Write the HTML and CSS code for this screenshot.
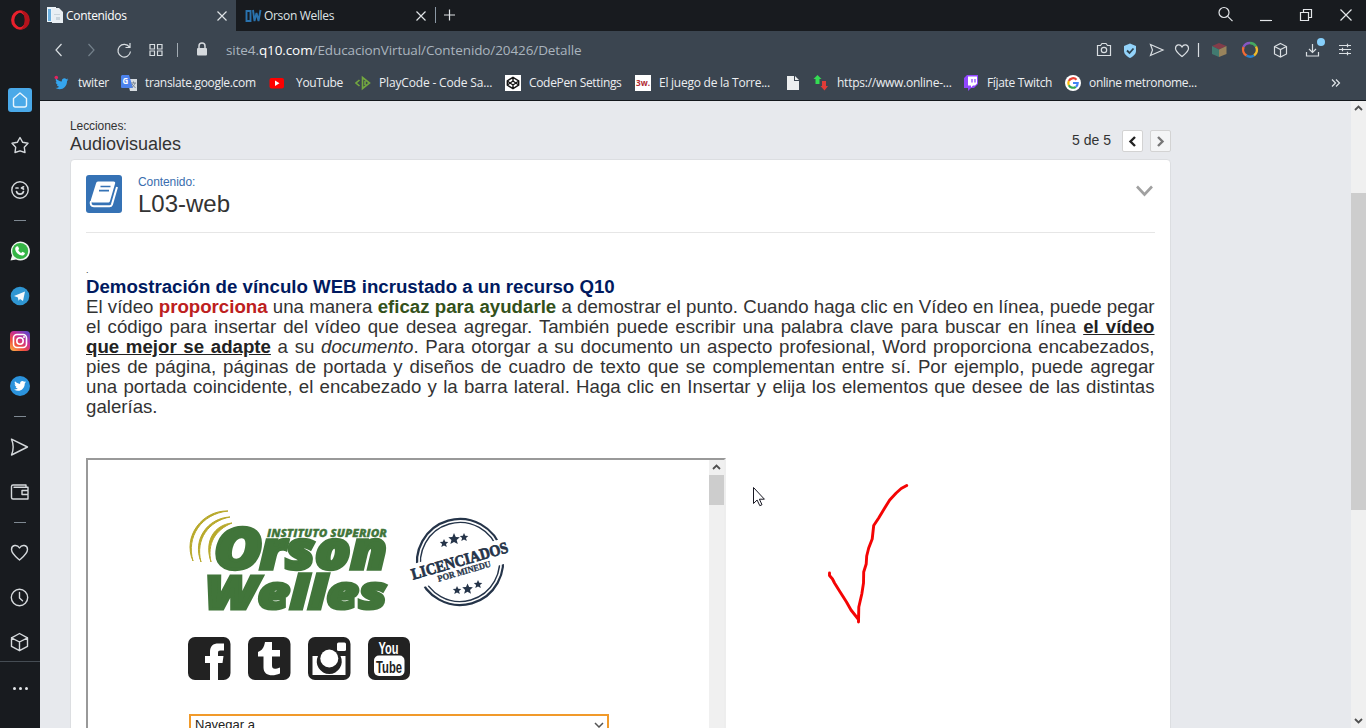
FILE: index.html
```html
<!DOCTYPE html>
<html lang="es">
<head>
<meta charset="utf-8">
<title>Contenidos</title>
<link rel="stylesheet" href="styles.css">
</head>
<body>
<aside class="sidebar">
  <div class="side-logo"><svg width="20" height="20" viewBox="0 0 20 20"><ellipse cx="10" cy="10" rx="7.3" ry="8.2" fill="none" stroke="#e8202c" stroke-width="3.2"/><path d="M10 .2a9.8 9.8 0 0 1 0 19.600c6-2 6-17.600 0-19.600z" fill="#b3131c"/><ellipse cx="10" cy="10" rx="4.300" ry="7.300" fill="#181b1f"/></svg></div>
  <div class="side-item"><span class="home"><svg class="ln" width="24" height="24" viewBox="0 0 24 24"><path d="M5.500 10.500 12 5l6.500 5.500V17a2 2 0 0 1-2 2h-9a2 2 0 0 1-2-2z"/></svg></span></div>
  <div class="side-item"><svg class="ln" width="24" height="24" viewBox="0 0 24 24"><path d="m12 4.500 2.700 4.800 5.300 1-3.700 4 .7 5.200-5-1.700-5 1.700.7-5.200-3.700-4 5.300-1z"/></svg></div>
  <div class="side-item"><svg class="ln" width="24" height="24" viewBox="0 0 24 24"><circle cx="12" cy="12" r="8.200"/><path d="M8.500 13.500c1 3.500 6 3.500 7 0M8 10h2M15.500 8.800l-2 1.200 2 1" stroke-width="1.700"/></svg></div>
  <div class="side-sep"></div>
  <div class="side-item"><svg width="20" height="20" viewBox="0 0 20 20"><path d="M.5 19.500 2 14.500A9.500 9.500 0 1 1 6 18.500z" fill="#f2f7f2"/><circle cx="10.200" cy="10" r="8" fill="#35b545"/><path d="M6.500 5.500 8 5.300l1.200 2.600-1 1.100c.7 1.400 1.700 2.300 3 2.900l1.200-1.200 2.500 1.300c0 1.700-1.400 2.700-3 2.500-3.700-.5-6.500-3.500-6.700-6.500 0-1 .4-2 1.300-2.500z" fill="#fff"/></svg></div>
  <div class="side-item"><svg width="20" height="20" viewBox="0 0 20 20"><circle cx="10" cy="10" r="9.300" fill="#2f96d2"/><path d="m4 10 11-4.500-2 9.500-3-2-1.500 1.700-.6-3.200z" fill="#f4f9fc"/></svg></div>
  <div class="side-item"><svg width="20" height="20" viewBox="0 0 20 20"><defs><linearGradient id="ig" x1="0" y1="1" x2=".8" y2="0"><stop offset="0" stop-color="#fdc04c"/><stop offset=".35" stop-color="#f0503c"/><stop offset=".65" stop-color="#c92f92"/><stop offset="1" stop-color="#6545c8"/></linearGradient></defs><rect width="20" height="20" rx="4" fill="url(#ig)"/><g fill="none" stroke="#fff" stroke-width="1.600"><rect x="3.500" y="3.500" width="13" height="13" rx="3.500"/><circle cx="10" cy="10" r="3.200"/></g><circle cx="14" cy="6" r="1" fill="#fff"/></svg></div>
  <div class="side-item"><svg width="20" height="20" viewBox="0 0 20 20"><circle cx="10" cy="10" r="10" fill="#2b93dc"/><path transform="translate(4 4.300) scale(.5)" fill="#fff" d="M24 3.500l-2.500.8c1-.6 1.500-1.400 1.800-2.400l-2.900 1.200C17-.5 11.500 2 12.200 7.200 8 7 4.500 5 2 2c-1.400 2.500-.6 5 1.400 6.500L1.300 8c.1 2.400 1.700 4.300 4 4.800l-2.200.2c.6 1.900 2.400 3.300 4.500 3.400C5.500 18 3 18.800 0 18.500c10 6 21.500.4 21.500-12.200z"/></svg></div>
  <div class="side-sep"></div>
  <div class="side-item"><svg class="ln" width="24" height="24" viewBox="0 0 24 24"><path d="M3.500 4.200 19.500 12l-16 8c2.300-5.500 2.300-10.500 0-15.800z"/></svg></div>
  <div class="side-item"><svg class="ln" width="24" height="24" viewBox="0 0 24 24"><path d="M20 10V7.300H6M18 7V5H5A1.500 1.500 0 0 0 3.500 6.500v11A1.500 1.500 0 0 0 5 19h15v-3.500M14 10.500h6v4h-6z"/></svg></div>
  <div class="side-sep side-sep-tight"></div>
  <div class="side-item"><svg class="ln" width="24" height="24" viewBox="0 0 24 24"><path d="M11.500 20C7.500 16.500 3.500 13.500 3.500 9.500c0-4.500 5.700-5.500 8-1.500 2.300-4 8-3 8 1.500 0 4-4 7-8 10.500z"/></svg></div>
  <div class="side-item"><svg class="ln" width="24" height="24" viewBox="0 0 24 24"><circle cx="11.500" cy="12.500" r="8.200"/><path d="M11.500 7.500V13l3 2.700"/></svg></div>
  <div class="side-item"><svg class="ln" width="24" height="24" viewBox="0 0 24 24"><path d="m11.500 3.500 8 4.300v8.600l-8 4.300-8-4.300V7.800zM3.500 7.800l8 4.200 8-4.200M11.500 12v8.500"/></svg></div>
  <div class="side-more"><i></i><i></i><i></i></div>
</aside>
<div class="window">
  <header class="tabs">
    <div class="tab tab-on"><svg width="17" height="17" viewBox="0 0 17 17"><path d="M0 0h9v15H0z" fill="#eaf4fb"/><path d="M1 2h3v12H1z" fill="#6aaede"/><path d="M5 1h7l4 4v11H5z" fill="#e9eff4"/><path d="M7 7h6v1H7zM9 10h4v3H9z" fill="#c9d4dc"/></svg><span class="tab-name">Contenidos</span><svg class="x" width="12" height="12" viewBox="0 0 12 12"><path d="M1.500 1.500l9 9m0-9-9 9"/></svg></div>
    <div class="tab"><svg width="17" height="14" viewBox="0 0 17 14"><path d="M1.500 2h4v10h-4zM8 1l1.500 11L11.500 4l2 8L15.500 1" fill="none" stroke="#2972ad" stroke-width="1.900"/></svg><span class="tab-name">Orson Welles</span><svg class="x" width="12" height="12" viewBox="0 0 12 12"><path d="M1.500 1.500l9 9m0-9-9 9"/></svg></div>
    <div class="tab-new"><svg class="x" width="12" height="12" viewBox="0 0 12 12"><path d="M5.500 .5v11M0 6h11"/></svg></div>
    <div class="win-buttons">
      <svg width="16" height="16" viewBox="0 0 16 16"><circle cx="7" cy="6.500" r="5"/><path d="m10.700 10.300 4.800 4.800"/></svg>
      <svg width="14" height="16" viewBox="0 0 14 16"><path d="M1 14.500h12"/></svg>
      <svg width="14" height="16" viewBox="0 0 14 16"><path d="M1.500 6.500h8v8h-8zM4.500 6V3.500h8v8H10"/></svg>
      <svg width="14" height="16" viewBox="0 0 14 16"><path d="m1.500 3.500 11 11m0-11-11 11"/></svg>
    </div>
  </header>
  <div class="toolbar">
    <svg class="nav" width="130" height="20" viewBox="0.5 0 130 20"><path d="M12 4 6.500 10 12 16"/><path d="m39 4 5.500 6L39 16" stroke="#74808b"/><path d="M80 7.200A6.300 6.300 0 1 0 81 11.500M80.500 3v4.500H76"/><path d="M100.500 4.500h4.500v4.500h-4.500zM108 4.500h4.500v4.500H108zM100.500 11h4.500v4.500h-4.500zM108 11h4.500v4.500H108z" stroke-width="1.200"/></svg>
    <span class="rule"></span>
    <svg class="lock" width="12" height="14" viewBox="0 0 12 14"><path d="M3 7V4a3 3 0 0 1 6 0v3" fill="none" stroke="#d5d9dd" stroke-width="1.500"/><rect x="1" y="6" width="10" height="7.500" rx="1" fill="#d5d9dd"/></svg>
    <span class="url">site4.<b>q10.com</b>/EducacionVirtual/Contenido/20426/Detalle</span>
    <svg class="tools" width="266" height="26" viewBox="1094 36 266 26">
      <path d="M1097.500 45.500h3l1.500-2h4l1.500 2h3v10h-13z"/><circle cx="1104" cy="50" r="2.700"/>
      <path d="M1130 43.500 1136 46v5c0 3-3 5.500-6 7-3-1.500-6-4-6-7v-5z" fill="#93d3fa" stroke="none"/><path d="m1127 50.500 2.500 2.500 4-4.500" stroke="#2d4250" stroke-width="1.800"/>
      <path d="m1150.500 44.500 12.500 5.500-12.500 5.500 2-5.500z"/>
      <path d="M1182 56.500c-3-2.500-6.500-5-6.500-8 0-4 4.700-5 6.500-1.500 1.800-3.500 6.500-2.500 6.500 1.500 0 3-3.500 5.500-6.500 8z"/>
      <path d="M1198.500 43v14"/>
      <g stroke="none"><path d="m1219 43 7.500 3-7.500 3.500-7-3.500z" fill="#823c49"/><path d="m1212 46 7 3.500V57l-7-3z" fill="#417a70"/><path d="m1219 49.500 7.500-3.500v8L1219 57z" fill="#98835c"/></g>
      <g stroke-width="2.500"><path d="M1243.500 47a7 7 0 0 1 6.500-4" stroke="#8657c2"/><path d="M1250 43a7 7 0 0 1 6 3.500" stroke="#45a861"/><path d="M1256 46.500a7 7 0 0 1-2 9" stroke="#efba2b"/><path d="M1254 55.500a7 7 0 0 1-7.500 0" stroke="#2481d0"/><path d="M1246.500 55.500a7 7 0 0 1-3-8.500" stroke="#f16a35"/></g>
      <path d="m1280.500 43.500 6 3v7.500l-6 3-6-3v-7.500zM1274.500 46.500l6 3 6-3M1280.500 49.500V57"/>
      <path d="M1312.500 44v8m-3.500-3 3.500 3.500 3.500-3.500M1306.500 52v4h12v-4"/><circle cx="1321" cy="42" r="4" fill="#86cffb" stroke="none"/>
      <path d="M1339 45.500h12M1339 49.500h12M1339 53.500h12M1347.500 43.800v3.500M1342.500 47.800v3.500M1347.500 51.800v3.500"/>
    </svg>
  </div>
  <nav class="bookmarks">
    <a><svg width="16" height="16" viewBox="0 0 16 16"><path transform="translate(1 2.500) scale(.56)" fill="#35a5ee" d="M24 3.500l-2.500.8c1-.6 1.500-1.400 1.800-2.400l-2.900 1.200C17-.5 11.500 2 12.200 7.200 8 7 4.500 5 2 2c-1.400 2.500-.6 5 1.400 6.500L1.300 8c.1 2.400 1.700 4.300 4 4.800l-2.200.2c.6 1.900 2.400 3.300 4.500 3.400C5.500 18 3 18.800 0 18.500c10 6 21.500.4 21.500-12.200z"/><circle cx="2.300" cy="2.500" r="1.800" fill="#e0245e"/></svg><span class="bk">twiter</span></a>
    <a><svg width="16" height="16" viewBox="0 0 16 16"><path d="M6 4h10v12H9z" fill="#d6dbe0"/><path d="M1 0h7l4 13H1a1 1 0 0 1-1-1V1z" fill="#4c82ed"/><text x="1.500" y="9" class="g-small">G</text><path d="M10 8h5m-2.500-1.500V8m-2 4c2-.5 3-2 3.500-4m-3 1 3.500 4" fill="none" stroke="#7b8795"/></svg><span class="bk bk-snug">translate.google.com</span></a>
    <a class="wide"><svg width="16" height="16" viewBox="0 0 16 16"><rect x=".5" y="3" width="14.500" height="10.500" rx="2" fill="#f00"/><path d="m6 5.500 4.500 2.700L6 11z" fill="#fff"/></svg><span class="bk bk-snug">YouTube</span></a>
    <a><svg width="16" height="16" viewBox="0 0 16 16"><path d="M4.500 5 1 8l3.500 3M7.500 2.500 14.500 8l-7 5.500zM10 6v4" fill="none" stroke="#73a83f" stroke-width="1.600"/></svg><span class="bk bk-loose">PlayCode - Code Sa...</span></a>
    <a><svg width="16" height="16" viewBox="0 0 16 16"><path d="M0 0h16v16H0z" fill="#fff"/><path d="m8 2.300 5.700 3.500v4.400L8 13.700l-5.700-3.500V5.800zM2.300 6 8 10l5.700-4M2.300 10 8 6l5.700 4M8 2.300V6m0 4v3.700" fill="none" stroke="#151515" stroke-width="1.400"/></svg><span class="bk bk-snug">CodePen Settings</span></a>
    <a><svg width="16" height="16" viewBox="0 0 16 16"><path d="M0 0h16v16H0z" fill="#fff"/><text x="1" y="11" class="w3" textLength="14" lengthAdjust="spacingAndGlyphs">3w.</text></svg><span class="bk">El juego de la Torre...</span></a>
    <a><svg width="13" height="16" viewBox="0 0 13 16"><path d="M0 1h7v5h5v9H0zM8 1l4 4H8z" fill="#eceeef"/></svg></a>
    <a><svg width="16" height="16" viewBox="0 0 16 16"><path d="M4.500 0 8.500 4H6.500v5h-4V4H.5z" fill="#34dc53"/><path d="M9 6h4v5h2l-3.500 4.500L7.500 11H9z" fill="#e03c38"/></svg><span class="bk">https://www.online-...</span></a>
    <a><svg width="16" height="16" viewBox="0 0 16 16"><path d="M4 0h11v9l-4 4H8l-3 3v-3H1V3z" fill="#9146ff"/><path d="M5 1.500h9v7l-2 2h-2l-2 2v-2H5z" fill="#fff"/><path d="M9 4v3.500M12 4v3.500" stroke="#9146ff" stroke-width="1.300"/></svg><span class="bk bk-snug">Fíjate Twitch</span></a>
    <a><svg width="16" height="16" viewBox="0 0 16 16"><circle cx="8" cy="8" r="8" fill="#fff"/><g fill="none" stroke-width="2.200"><path d="M11.500 4.700A4.700 4.700 0 0 0 3.800 6" stroke="#ea4335"/><path d="M3.800 6a5 5 0 0 0 0 4.200" stroke="#fbbc05"/><path d="M3.800 10.200a4.700 4.700 0 0 0 7 1.600" stroke="#34a853"/><path d="M8 8h4.700c0 1.700-.7 3-1.900 3.800" stroke="#4285f4"/></g></svg><span class="bk bk-snug">online metronome...</span></a>
    <a class="more"><svg width="10" height="10" viewBox="0 0 10 10"><path d="m1 1.500 3.500 3.500L1 8.500m4-7 3.500 3.500L5 8.500" fill="none" stroke="#e2e6e9" stroke-width="1.200"/></svg></a>
  </nav>
  <div class="viewport">
    <main class="page">
      <div class="page-head">
        <div><div class="small-label">Lecciones:</div><div class="lesson">Audiovisuales</div></div>
        <div class="pager"><span>5 de 5</span>
          <button class="pg"><svg width="9" height="11" viewBox="0 0 9 11"><path d="M7 1 2.500 5.500 7 10" stroke="#222"/></svg></button>
          <button class="pg pg-off"><svg width="9" height="11" viewBox="0 0 9 11"><path d="m2 1 4.500 4.500L2 10" stroke="#777"/></svg></button>
        </div>
      </div>
      <section class="card">
        <div class="card-head">
          <svg width="36" height="38" viewBox="0 0 36 38"><rect width="36" height="38" rx="3" fill="#3572b5"/><path d="M12 6.500h15.500c1.300 0 2 .8 1.600 2L24 26c-.3 1-1 1.600-2 1.600H7c-2 0-2.500-1.500-2-3L10 8.500c.3-1.300 1-2 2-2z" fill="#fff"/><path d="M5 26c-1 3 0 5.300 3 5.300h15.500c1.300 0 2-.6 2.400-1.700L31 12" fill="none" stroke="#fff" stroke-width="2"/><path d="M14.500 11.500h10M13 15.700h10" stroke="#3572b5" stroke-width="1.700"/></svg>
          <div class="card-titles"><div class="small-label blue">Contenido:</div><h1>L03-web</h1></div>
          <svg class="chev" width="18" height="12" viewBox="0 0 18 12"><path d="m1 1.500 7.500 8 7.500-8" fill="none" stroke="#a0a0a0" stroke-width="2.600"/></svg>
        </div>
        <div class="dot">.</div>
        <h2>Demostración de vínculo WEB incrustado a un recurso Q10</h2>
        <p class="text">El vídeo <b class="red">proporciona</b> una manera <b class="green">eficaz para ayudarle</b> a demostrar el punto. Cuando haga clic en Vídeo en línea, puede pegar el código para insertar del vídeo que desea agregar. También puede escribir una palabra clave para buscar en línea <b class="under">el vídeo que mejor se adapte</b> a su <i>documento</i>. Para otorgar a su documento un aspecto profesional, Word proporciona encabezados, pies de página, páginas de portada y diseños de cuadro de texto que se complementan entre sí. Por ejemplo, puede agregar una portada coincidente, el encabezado y la barra lateral. Haga clic en Insertar y elija los elementos que desee de las distintas galerías.</p>
        <div class="frame">
          <div class="frame-body">
            <svg class="brand" width="340" height="110" viewBox="180 505 340 110">
              <path d="M228 511c-25-1-46 25-35 50-7-24 8-47 35-50z" fill="#b8a92a" stroke="#b8a92a"/>
              <path d="M230 517c-22 1-38 22-29 45-6-23 8-41 29-45z" fill="#b8a92a" stroke="#b8a92a"/>
              <path d="M232 523c-18 2-28 18-21 39-4-18 4-32 21-39z" fill="#b8a92a" stroke="#b8a92a"/>
              <g class="brand-text">
                <text x="267" y="537" font-size="11" textLength="120" lengthAdjust="spacingAndGlyphs" stroke-width=".3">INSTITUTO SUPERIOR</text>
                <text x="214" y="569" font-size="57" textLength="48" lengthAdjust="spacingAndGlyphs" stroke-width="3.500">O</text>
                <text x="260" y="569" font-size="53" textLength="127" lengthAdjust="spacingAndGlyphs" stroke-width="3.500">rson</text>
                <text x="205" y="608.500" font-size="46" textLength="182" lengthAdjust="spacingAndGlyphs" stroke-width="3.200">Welles</text>
              </g>
              <g transform="rotate(-16 460 562)"><circle cx="460" cy="562" r="43" fill="none" stroke="#253449" stroke-width="2.200"/><circle cx="460" cy="562" r="39.500" fill="none" stroke="#253449" stroke-width="1.400"/><path d="M410 551h100v25H410z" fill="#fff"/>
                <text x="410" y="566" class="stamp" font-size="16" textLength="100" lengthAdjust="spacingAndGlyphs">LICENCIADOS</text>
                <text x="434" y="575" class="stamp stamp-small" font-size="9" textLength="55" lengthAdjust="spacingAndGlyphs">POR MINEDU</text></g>
              <g class="stars"><path id="star" d="m444 539 1.300 2.800 3 .2-2.300 2.100.8 3-2.800-1.600-2.700 1.600.8-3-2.300-2.100 3-.2z"/><use href="#star" transform="translate(454 538.500) scale(1.350) translate(-444 -543)"/><use href="#star" x="20" y="-6"/><use href="#star" x="13" y="47"/><use href="#star" transform="translate(467.500 588.500) scale(1.250) translate(-444 -543)"/><use href="#star" x="34" y="41"/></g>
            </svg>
            <svg class="social" width="222" height="43" viewBox="0 0 222 43"><g fill="#222"><rect width="42.500" height="43" rx="7"/><rect x="60" width="42.500" height="43" rx="7"/><rect x="120" width="42.500" height="43" rx="7"/><rect x="180" width="42" height="43" rx="7"/></g>
              <path d="M22 43V26h-5v-7h5v-4c0-6 3-8.500 8.500-8.500H36v7h-3.500c-2 0-2.500.8-2.500 2.500v3h5.500l-1 7H30v17z" fill="#fff"/>
              <path d="M77 5h7v8h8v6.500h-8v9c0 4 3 4 8 2v6c-8 3.500-16.500 2-16.500-6V19.500H70V15c4-1.500 6-4.500 7-10z" fill="#fff"/>
              <path d="M124.500 19h5.500a12.500 12.500 0 1 0 22.500 0h5v19h-33z" fill="#fff"/><circle cx="141.300" cy="21.500" r="9" fill="#fff"/><rect x="149" y="5.500" width="9" height="8.500" rx="1.500" fill="#fff"/>
              <rect x="186" y="18.500" width="30.500" height="20.500" rx="5" fill="#fff"/>
              <text x="190.500" y="16.500" class="you" fill="#fff" textLength="20" lengthAdjust="spacingAndGlyphs">You</text><text x="188" y="35.500" class="you" fill="#222" textLength="26" lengthAdjust="spacingAndGlyphs">Tube</text></svg>
            <div class="select"><span>Navegar a</span><svg width="10" height="6" viewBox="0 0 10 6"><path d="m1 1 4 4 4-4" fill="none" stroke="#555" stroke-width="1.500"/></svg></div>
          </div>
          <div class="frame-scroll"><svg width="9" height="6" viewBox="0 0 9 6"><path d="M1 5 4.500 1.500 8 5" fill="none" stroke="#505050" stroke-width="1.800"/></svg><div class="frame-thumb"></div></div>
        </div>
      </section>
    </main>
    <div class="scroll"><svg width="9" height="6" viewBox="0 0 9 6"><path d="M1 5 4.500 1.500 8 5" fill="none" stroke="#505050" stroke-width="1.800"/></svg><div class="thumb"></div><svg class="down" width="9" height="6" viewBox="0 0 9 6"><path d="m1 1 3.500 3.500L8 1" fill="none" stroke="#505050" stroke-width="1.800"/></svg></div>
  </div>
</div>
<svg class="ink" width="90" height="150" viewBox="825 480 90 150"><path d="M829.500 573v2.500l3 3.500 2 4 5 8 7 11 4.500 8 7.500 9.500V622l.3-15 3-13 1.700-11 .2-11 2.500-8 .5-8 2-8 3.500-9 1.500-13.500 5-7.500 6-10 5-8 6.500-7 5-4.500 5.500-3" fill="none" stroke="#f40404" stroke-width="2.900" stroke-linecap="round" stroke-linejoin="round"/></svg>
<svg class="cursor" width="13" height="21" viewBox="0 0 13 21"><path d="M.5.500v16l3.600-3.500 2.700 5.700 2.200-1-2.600-5.500h5z" fill="#fff" stroke="#171722"/></svg>
</body>
</html>
```

FILE: styles.css
```css
* { box-sizing: border-box; }
body { margin: 0; width: 1366px; height: 728px; overflow: hidden; display: flex; font-family: "Liberation Sans", Arial, sans-serif; background: #e7e9ed; }
svg { flex: none; display: block; }

.sidebar { width: 40px; height: 728px; background: #181b1f; display: flex; flex-direction: column; flex: none; }
.side-logo { height: 40px; margin-bottom: 37.5px; display: flex; align-items: center; justify-content: center; }
.side-item { height: 45px; display: flex; align-items: center; justify-content: center; flex: none; }
.home { width: 24px; height: 24px; border-radius: 3px; background: #4aa9e8; }
.ln { fill: none; stroke: #d5d9dc; stroke-width: 1.4; stroke-linejoin: round; stroke-linecap: round; }
.home .ln { stroke: #e8f5fd; }
.side-sep { height: 16px; padding: 7px 14px 0; flex: none; }
.side-sep::before { content: ""; display: block; height: 1px; background: #7f8992; }
.side-sep-tight { height: 15px; }
.side-more { margin-top: -3.5px; height: 54px; border-top: 1px solid #454c53; display: flex; gap: 3px; align-items: center; justify-content: center; flex: none; }
.side-more i { width: 3px; height: 3px; border-radius: 50%; background: #e3e6e9; }

.window { width: 1326px; display: flex; flex-direction: column; }
.tabs { height: 31px; background: #181b1f; display: flex; font: 12px "Open Sans", "Noto Sans", sans-serif; color: #dfe3e6; flex: none; }
.tab { width: 200px; padding: 0 9px 0 9px; display: flex; align-items: center; gap: 2px; }
.tab-on { width: 196px; padding: 0 8px 0 7px; background: #3b4550; color: #fff; }
.tab-name { flex: 1; letter-spacing: -.32px; white-space: nowrap; }
.x { fill: none; stroke: #dfe3e6; stroke-width: 1.2; }
.tab-new { margin: 7px 0 8px -1px; border-left: 1px solid #8b98a5; padding: 2px 0 0 8px; }
.win-buttons { margin-left: auto; padding: 6px 13px 0 0; display: flex; gap: 26px; }
.win-buttons svg { fill: none; stroke: #e3e6e9; stroke-width: 1.2; }
.toolbar { height: 36px; padding: 0 6px 0 10px; background: #3b4550; display: flex; align-items: center; flex: none; }
.nav, .tools { fill: none; stroke: #d9dee2; stroke-width: 1.2; }
.nav { margin-top: 1px; }
.rule { width: 1px; height: 14px; background: #a2abb3; margin: 2px 0 0 -3px; }
.lock { margin: 0 18px 0 18px; }
.url { font: 13.5px "Open Sans", "Noto Sans", sans-serif; color: #aab4be; letter-spacing: -.1px; white-space: nowrap; flex: 1; padding: 2px 0 0; }
.url b { color: #fff; font-weight: 400; }
.bookmarks { height: 34px; padding: 0 0 2px 14px; background: #3b4550; border-bottom: 1px solid #14181c; display: grid; grid-template-columns: 67px 148px 86px 150px 130px 152px 26px 150px 102px 1fr 35px; align-items: center; font: 12px "Open Sans", "Noto Sans", sans-serif; color: #eceef0; flex: none; }
.bookmarks a { display: flex; align-items: center; gap: 8px; white-space: nowrap; }
.bookmarks .wide { gap: 11px; }
.bk { letter-spacing: -.25px; }
.bk-snug { letter-spacing: -.33px; }
.bk-loose { letter-spacing: -.16px; }
.g-small { font: bold 8px "Open Sans", sans-serif; fill: #fff; }
.w3 { font: bold 9px "Open Sans", sans-serif; fill: #b12b33; }

.viewport { flex: 1; display: flex; min-height: 0; background: #e7e9ed; }
.page { flex: 1; padding: 17px 180px 0 30px; min-height: 0; overflow: hidden; color: #333; }
.page-head { height: 41px; display: flex; justify-content: space-between; }
.small-label { font-size: 12px; line-height: 16px; letter-spacing: -.08px; }
.lesson { font-size: 18px; line-height: 20px; }
.pager { display: flex; gap: 7px; align-items: flex-start; padding-top: 12px; font-size: 14px; line-height: 20px; }
.pager span { margin-right: 4px; }
.pg { width: 21px; height: 22px; padding: 0; background: #fff; border: 1px solid #d3d3d3; border-radius: 2px; display: flex; align-items: center; justify-content: center; }
.pg svg { fill: none; stroke-width: 2.4; }
.pg-off { background: #f4f5f6; }
.card { background: #fff; width: 1101px; height: 640px; border: 1px solid #dcdee1; border-radius: 4px 4px 0 0; padding: 15px 15px 0; }
.card-head { height: 58px; display: flex; border-bottom: 1px solid #e6e6e6; }
.card-titles { padding-left: 16px; flex: 1; }
.blue { color: #3a6eae; line-height: 14px; }
h1 { margin: 0; font-size: 24px; line-height: 30px; font-weight: 400; color: #333; }
.chev { margin: 10px 1px 0 0; }
.dot { margin-top: 33px; height: 11px; font-size: 9px; line-height: 9px; }
h2 { margin: 0; font-size: 18.67px; line-height: 20px; color: #001a60; }
.text { margin: 0 .5px 0 0; font-size: 18.67px; line-height: 20px; text-align: justify; }
.red { color: #bd2020; }
.green { color: #33511a; }
.under { text-decoration: underline; color: #222; }
.frame { margin-top: 41px; width: 640px; height: 300px; border: 2px solid; border-color: #999 #eee #eee #999; display: flex; }
.frame-body { flex: 1; padding: 45px 0 0 92px; }
.brand-text { font-family: "Open Sans", Lato, sans-serif; font-weight: 800; font-style: italic; fill: #41753a; stroke: #41753a; }
.brand, .social { overflow: visible; }
.stamp { font-family: "Liberation Serif", serif; font-weight: 700; fill: #253449; stroke: #253449; stroke-width: .7; }
.stamp-small { stroke-width: .3; }
.stars { fill: #253449; }
.social { margin: 22px 0 0 8px; }
.you { font: bold 17px "Liberation Sans", sans-serif; }
.select { margin: 34px 0 0 9px; width: 420px; height: 24px; border: 2px solid #f19a2a; display: flex; justify-content: space-between; padding: 1px 3px 0 4px; font-size: 13px; line-height: 16px; color: #222; }
.select svg { margin-top: 5px; }
.frame-scroll { width: 15px; background: #f0f0f0; padding-top: 4px; display: flex; flex-direction: column; align-items: center; }
.frame-thumb { margin-top: 5px; width: 15px; height: 30px; background: #cdcdcd; }
.scroll { width: 15px; background: #f0f0f0; display: flex; flex-direction: column; align-items: center; padding-top: 4px; }
.thumb { width: 15px; height: 317px; background: #cdcdcd; margin-top: 82px; }
.down { margin: auto 0 4px; }
.ink { position: absolute; left: 825px; top: 480px; }
.cursor { position: absolute; left: 753px; top: 487px; }
```
